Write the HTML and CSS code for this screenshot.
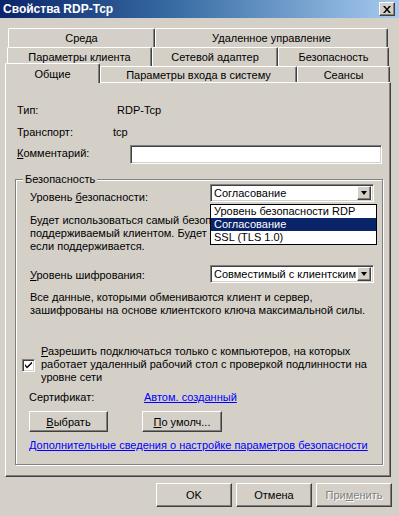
FILE: index.html
```html
<!DOCTYPE html>
<html lang="ru">
<head>
  <meta charset="UTF-8" />
  <title>Свойства RDP-Tcp</title>
  <link rel="stylesheet" href="styles.css">
</head>
<body>

  <!-- Title bar -->
  <div class="titlebar">
    <span class="title">Свойства RDP-Tcp</span>
    <span class="close">
      <svg width="8" height="7" viewBox="0 0 8 7"><path d="M0 0 L2 0 L4 2.5 L6 0 L8 0 L5 3.5 L8 7 L6 7 L4 4.5 L2 7 L0 7 L3 3.5 Z" fill="#000"/></svg>
    </span>
  </div>

  <!-- Tabs -->
  <div class="tabs">
    <div class="tab-row row1">
      <div class="tab" style="width:147px">Среда</div>
      <div class="tab" style="width:233px">Удаленное управление</div>
    </div>
    <div class="tab-row row2">
      <div class="tab" style="width:145px">Параметры клиента</div>
      <div class="tab" style="width:126px">Сетевой адаптер</div>
      <div class="tab" style="width:111px">Безопасность</div>
    </div>
    <div class="tab-row row3">
      <div class="tab active" style="width:95px">Общие</div>
      <div class="tab" style="width:197px">Параметры входа в систему</div>
      <div class="tab" style="width:93px">Сеансы</div>
    </div>
  </div>

  <!-- Page -->
  <div class="panel">
    <div class="info-row">
      <span class="label">Тип:</span>
      <span>RDP-Tcp</span>
    </div>
    <div class="info-row">
      <span class="label">Транспорт:</span>
      <span class="shift">tcp</span>
    </div>
    <div class="info-row comment-row">
      <span class="label comment-label"><u>К</u>омментарий:</span>
      <div class="textbox"></div>
    </div>

    <div class="group">
      <span class="legend">Безопасность</span>

      <div class="combo-row first">
        <span class="combo-label">Уровень <u>б</u>езопасности:</span>
        <div class="combo">
          <span class="combo-text">Согласование</span>
          <span class="combo-btn"><i class="arrow"></i></span>
          <ul class="droplist">
            <li>Уровень безопасности RDP</li>
            <li class="selected">Согласование</li>
            <li>SSL (TLS 1.0)</li>
          </ul>
        </div>
      </div>

      <p class="note desc">Будет использоваться самый безопасный уровень,<br>поддерживаемый клиентом. Будет использоваться SSL (TLS 1.0),<br>если поддерживается.</p>

      <div class="combo-row enc">
        <span class="combo-label"><u>У</u>ровень шифрования:</span>
        <div class="combo">
          <span class="combo-text">Совместимый с клиентским</span>
          <span class="combo-btn"><i class="arrow"></i></span>
        </div>
      </div>

      <p class="note data">Все данные, которыми обмениваются клиент и сервер,<br>зашифрованы на основе клиентского ключа максимальной силы.</p>

      <div class="check-row">
        <span class="checkbox">
          <svg width="7" height="7" viewBox="0 0 7 7"><path d="M0 2 L0 4 L2 6.5 L7 1.5 L7 -0.5 L2 4.5 Z" fill="#000"/></svg>
        </span>
        <p class="note"><u>Р</u>азрешить подключаться только с компьютеров, на которых<br>работает удаленный рабочий стол с проверкой подлинности на<br>уровне сети</p>
      </div>

      <div class="cert-row">
        <span class="cert-label">Сертификат:</span>
        <a href="#" class="link">Автом. созданный</a>
      </div>

      <div class="btn-row">
        <button class="btn pick"><u>В</u>ыбрать</button>
        <button class="btn def"><u>П</u>о умолч...</button>
      </div>

      <a href="#" class="link more">Дополнительные сведения о настройке параметров безопасности</a>
    </div>
  </div>

  <!-- Dialog buttons -->
  <div class="dialog-buttons">
    <button class="btn big">OK</button>
    <button class="btn big">Отмена</button>
    <button class="btn big disabled">При<u>м</u>енить</button>
  </div>

</body>
</html>
```

FILE: styles.css
```css
* { box-sizing: border-box; margin: 0; padding: 0; }

body {
  font-family: 'Liberation Sans', Arial, sans-serif;
  font-size: 11px;
  color: #000;
  background-color: #d4d0c8;
  width: 399px;
  height: 516px;
  overflow: hidden;
}

/* title bar */
.titlebar {
  height: 18px;
  background: linear-gradient(to right, #0a246a 0%, #3a6ea5 45%, #a6caf0 100%);
  display: flex;
  justify-content: space-between;
  align-items: center;
  padding: 0 4px 0 3px;
}

.title {
  color: white;
  font-weight: bold;
  font-size: 12px;
}

.close {
  width: 16px;
  height: 14px;
  background: #d4d0c8;
  border: 1px solid;
  border-color: #fff #404040 #404040 #fff;
  box-shadow: inset -1px -1px 0 #808080;
  display: flex;
  align-items: center;
  justify-content: center;
}

/* tabs */
.tabs {
  margin-top: 10px;
}

.tab-row {
  display: flex;
  height: 19px;
}

.row1 { margin-left: 8px; }
.row2 { margin-left: 7px; }
.row3 { margin-left: 5px; height: 16px; }

.tab {
  height: 100%;
  border-top: 1px solid #fff;
  border-left: 1px solid #fff;
  border-right: 1px solid #404040;
  box-shadow: inset -1px 0 0 #808080;
  border-radius: 2px 2px 0 0;
  background: #d4d0c8;
  display: flex;
  align-items: center;
  justify-content: center;
  white-space: nowrap;
}

.tab.active {
  height: 20px;
  margin-top: -3px;
  position: relative;
  z-index: 2;
}

/* page */
.panel {
  margin-left: 5px;
  width: 386px;
  height: 395px;
  border: 1px solid;
  border-color: #fff #404040 #404040 #fff;
  box-shadow: inset -1px -1px 0 #808080;
  padding: 16px 7px 0 9px;
}

.info-row {
  display: flex;
  align-items: center;
  height: 22px;
  padding-left: 2px;
}

.label { width: 100px; }
.shift { margin-left: -4px; }

.comment-row { height: 23px; }
.comment-label { width: 113px; margin-top: -4px; }

.textbox {
  flex: 1;
  height: 19px;
  margin-right: 1px;
  background: white;
  border: 1px solid;
  border-color: #808080 #fff #fff #808080;
  box-shadow: inset 1px 1px 0 #404040, inset -1px -1px 0 #d4d0c8;
}

/* group box */
.group {
  position: relative;
  margin-top: 13px;
  height: 286px;
  border: 1px solid #808080;
  box-shadow: inset 1px 1px 0 #fff, 1px 1px 0 #fff;
  padding: 4px 8px 0 14px;
}

.legend {
  position: absolute;
  top: -8px;
  left: 7px;
  padding: 0 2px;
  background: #d4d0c8;
  line-height: 14px;
}

.combo-row {
  display: flex;
  align-items: center;
  height: 18px;
}

.combo-label {
  width: 180px;
  margin-top: 8px;
}

.enc { margin-top: 12px; }
.enc .combo-label { margin-top: 2px; }

.combo {
  position: relative;
  width: 164px;
  height: 18px;
  background: white;
  border: 1px solid;
  border-color: #808080 #fff #fff #808080;
  box-shadow: inset 1px 1px 0 #404040, inset -1px -1px 0 #d4d0c8;
  display: flex;
  align-items: center;
  padding: 0 2px 0 3px;
}

.combo-text {
  flex: 1;
  overflow: hidden;
  white-space: nowrap;
}

.combo-btn {
  width: 14px;
  height: 14px;
  background: #d4d0c8;
  border: 1px solid;
  border-color: #fff #404040 #404040 #fff;
  box-shadow: inset -1px -1px 0 #808080;
  display: flex;
  align-items: center;
  justify-content: center;
}

.arrow {
  width: 0;
  height: 0;
  border-left: 3.5px solid transparent;
  border-right: 3.5px solid transparent;
  border-top: 4px solid #000;
}

/* open drop-down list */
.droplist {
  position: absolute;
  top: 19px;
  left: -1px;
  width: 167px;
  list-style: none;
  background: white;
  border: 1px solid #000;
  z-index: 5;
}

.droplist li {
  height: 13px;
  line-height: 13px;
  padding-left: 3px;
  white-space: nowrap;
}

.droplist li.selected {
  background: #0a246a;
  color: white;
}

.note {
  line-height: 13px;
  white-space: nowrap;
}

/* the open list hides the right part of this text */
.desc {
  margin-top: 12px;
  width: 180px;
  overflow: hidden;
}

.data { margin-top: 8px; }

.check-row {
  display: flex;
  align-items: center;
  margin-top: 28px;
  margin-left: -8px;
  gap: 6px;
}

.checkbox {
  width: 13px;
  height: 13px;
  margin-top: 1px;
  background: white;
  border: 1px solid;
  border-color: #808080 #fff #fff #808080;
  box-shadow: inset 1px 1px 0 #404040, inset -1px -1px 0 #d4d0c8;
  display: flex;
  align-items: center;
  justify-content: center;
}

.cert-row {
  display: flex;
  margin-top: 7px;
  margin-left: -1px;
  line-height: 13px;
}

.cert-label { width: 115px; }

.link {
  color: #0000ff;
  text-decoration: underline;
}

.btn-row {
  display: flex;
  gap: 34px;
  margin-top: 7px;
  margin-left: -1px;
}

.btn {
  font-family: inherit;
  font-size: 11px;
  color: #000;
  background: #d4d0c8;
  border: 1px solid;
  border-color: #fff #404040 #404040 #fff;
  box-shadow: inset -1px -1px 0 #808080;
  display: flex;
  align-items: center;
  justify-content: center;
}

.pick { width: 79px; height: 21px; }
.def { width: 80px; height: 21px; }

.more {
  display: block;
  margin-top: 7px;
  margin-left: -1px;
  line-height: 13px;
  white-space: nowrap;
}

/* dialog buttons */
.dialog-buttons {
  display: flex;
  justify-content: flex-end;
  gap: 4px;
  margin-top: 6px;
  padding-right: 7px;
}

.big {
  width: 76px;
  height: 24px;
}

.disabled {
  color: #808080;
  text-shadow: 1px 1px 0 #fff;
}
```
